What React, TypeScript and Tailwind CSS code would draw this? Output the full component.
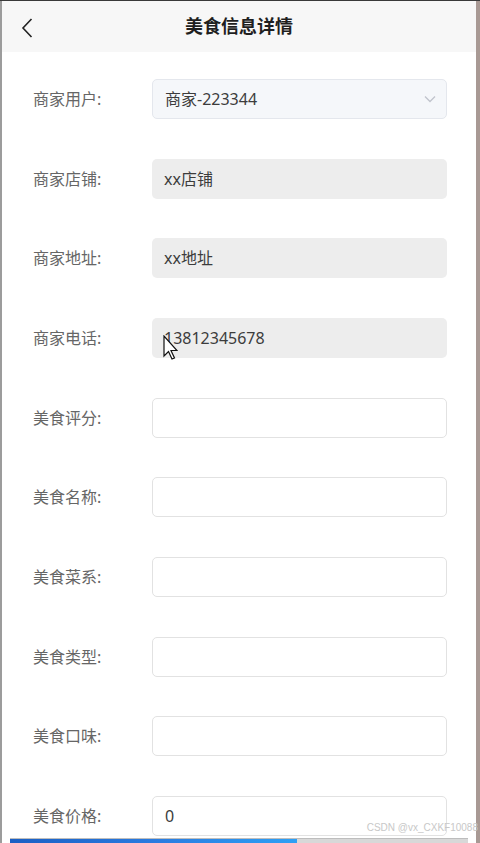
import React from "react";

type Row = { label: string; value: string; kind: "select" | "disabled" | "input" };

const rows: Row[] = [
  { label: "商家用户:", value: "商家-223344", kind: "select" },
  { label: "商家店铺:", value: "xx店铺", kind: "disabled" },
  { label: "商家地址:", value: "xx地址", kind: "disabled" },
  { label: "商家电话:", value: "13812345678", kind: "disabled" },
  { label: "美食评分:", value: "", kind: "input" },
  { label: "美食名称:", value: "", kind: "input" },
  { label: "美食菜系:", value: "", kind: "input" },
  { label: "美食类型:", value: "", kind: "input" },
  { label: "美食口味:", value: "", kind: "input" },
  { label: "美食价格:", value: "0", kind: "input" },
];

const font = { fontFamily: '"Noto Sans", "Noto Sans CJK SC", sans-serif' };

function Field({ row }: { row: Row }) {
  const base = "flex h-10 w-[295px] items-center rounded-[5px] pl-[12px] pr-[10px] text-[16px] text-[#3c3c3c]";
  const cls =
    row.kind === "select"
      ? `${base} border border-[#e4e7ed] bg-[#f5f7fa]`
      : row.kind === "disabled"
      ? `${base} bg-[#ededed]`
      : `${base} border border-[#e2e2e2] bg-white`;
  return (
    <div className={cls}>
      <span className="flex-1 leading-none">{row.value}</span>
      {row.kind === "select" && (
        <svg width="12" height="8" viewBox="0 0 12 8" fill="none">
          <path d="M1 1.5L6 6.5L11 1.5" stroke="#c0c4cc" strokeWidth="1.3" />
        </svg>
      )}
    </div>
  );
}

export default function App() {
  return (
    <div
      className="relative h-[843px] w-[480px] overflow-hidden border-t border-t-[#3a3a3a] bg-white"
      style={font}
    >
      <div className="flex h-full">
        <div className="w-[2px] shrink-0 bg-[#9c9c9c]" />
        <div className="flex w-[474px] shrink-0 flex-col">
          <div className="relative flex h-[51px] items-center justify-center bg-[#f7f7f7]">
            <svg
              className="absolute left-[18px] top-[16px]"
              width="14"
              height="22"
              viewBox="0 0 14 22"
              fill="none"
            >
              <path d="M11.5 2L3 11L11.5 20" stroke="#222" strokeWidth="1.6" />
            </svg>
            <span className="text-[18px] font-bold text-[#1f1f1f]">美食信息详情</span>
          </div>
          <div className="flex flex-col gap-[39.67px] pl-[31px] pt-[27px]">
            {rows.map((r) => (
              <div key={r.label} className="flex h-10 items-center">
                <span className="w-[119px] text-[16px] text-[#666]">{r.label}</span>
                <Field row={r} />
              </div>
            ))}
          </div>
        </div>
        <div className="w-[4px] shrink-0 bg-[#a89994]" />
      </div>

      <svg
        className="absolute left-[162px] top-[334px]"
        width="16"
        height="28"
        viewBox="0 0 16 28"
      >
        <path d="M2 1V21L6.5 16.5L10 24L12.5 23L9 15.5H15Z" fill="#fff" stroke="#111" strokeWidth="1.2" />
      </svg>

      <div className="absolute bottom-[8px] right-[2px] text-[10px] text-[#c8c8c8]" style={{ fontFamily: '"Liberation Sans", sans-serif' }}>
        CSDN @vx_CXKF10088
      </div>

      <div className="absolute bottom-0 left-[10px] flex h-[5px] w-[458px] border-t border-[#bdbdbd] bg-[#d8d8d8]">
        <div className="h-full w-[287px] bg-gradient-to-r from-[#1a5fc4] via-[#2a7be0] to-[#2ea0f5]" />
      </div>
    </div>
  );
}
